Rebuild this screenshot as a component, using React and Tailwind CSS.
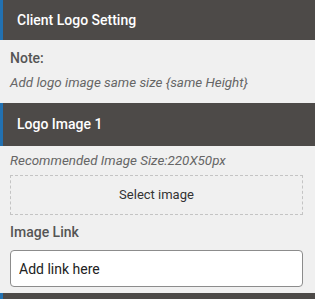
const Header = ({ title, h }) => (
  <div
    className={`flex items-center border-l-[3px] border-[#2271b1] bg-[#4d4a48] pl-[14px] text-[14px] font-medium text-white ${h}`}
  >
    {title}
  </div>
);

const App = () => {
  return (
    <div
      className="h-[299px] w-[315px] overflow-hidden bg-[#f0f0f0]"
      style={{ fontFamily: "Roboto, 'Liberation Sans', sans-serif" }}
    >
      <Header title="Client Logo Setting" h="h-[40px]" />

      <div className="px-[10px] pb-[10px] pt-[8px]">
        <div className="text-[14px] font-medium leading-[20px] text-[#555]">Note:</div>
        <div className="mt-[5px] text-[13.4px] italic leading-[20px] text-[#666]">
          Add logo image same size {"{same Height}"}
        </div>
      </div>

      <Header title="Logo Image 1" h="h-[43px]" />

      <div className="px-[10px] pb-[6px] pt-[5px]">
        <div className="text-[13.4px] italic leading-[20px] text-[#666]">
          Recommended Image Size:220X50px
        </div>
        <button className="mt-[4px] flex h-[40px] w-[293px] items-center justify-center border border-dashed border-[#c4c4c4] text-[13px] text-[#333]">
          Select image
        </button>
        <div className="mt-[7px] text-[14px] font-medium leading-[20px] text-[#555]">
          Image Link
        </div>
        <input
          className="mt-[8px] h-[37px] w-[293px] rounded-[4px] border border-[#8c8c8c] bg-white px-[8px] text-[14px] text-[#222] outline-none placeholder:text-[#222]"
          placeholder="Add link here"
        />
      </div>

      <Header title="" h="h-[40px]" />
    </div>
  );
};

export default App;
